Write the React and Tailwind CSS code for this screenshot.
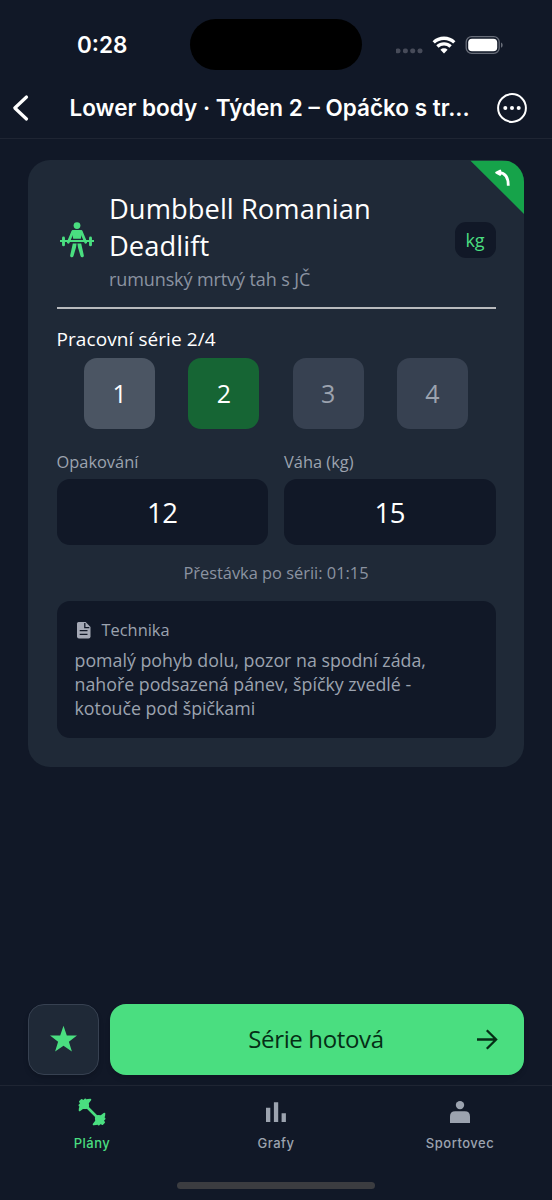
import React, { useState } from 'react';

const sets = [1, 2, 3, 4];

const tabs = [
  { id: 'plans', label: 'Plány', icon: DumbbellIcon },
  { id: 'charts', label: 'Grafy', icon: ChartIcon },
  { id: 'athlete', label: 'Sportovec', icon: PersonIcon },
];

function StatusBar() {
  return (
    <div className="flex h-[77px] items-start">
      <div className="w-[190px] pl-[77px] pt-[30px] text-[22.5px] leading-[30px] font-semibold">0:28</div>
      <div className="mt-[19px] h-[51px] w-[172px] rounded-full bg-black" />
      <div className="flex items-start pt-[36px] pl-[34px]">
        <svg className="h-[18px] w-[108px]" viewBox="0 0 108 18" fill="none">
          <g fill="#474b59">
            <rect x="-0.4" y="12.5" width="4.8" height="4.8" rx="1.8" />
            <rect x="7" y="12.5" width="4.8" height="4.8" rx="1.8" />
            <rect x="14.3" y="12.5" width="4.8" height="4.8" rx="1.8" />
            <rect x="21.6" y="12.5" width="4.8" height="4.8" rx="1.8" />
          </g>
          <g stroke="#fff" strokeWidth="3.3">
            <path d="M37.7 6.400A14.8 14.8 0 0 1 58.3 6.400" />
            <path d="M41.4 10.500A9.400 9.400 0 0 1 54.6 10.500" />
          </g>
          <path d="M44.4 13.700a5.200 5.200 0 0 1 7.200 0L48 17.400z" fill="#fff" />
          <rect x="70.2" y="0.700" width="33" height="16.600" rx="5.400" stroke="#686d79" strokeWidth="1.3" />
          <rect x="72.2" y="2.700" width="29" height="12.600" rx="3.800" fill="#fff" />
          <path d="M105 6.500c2.200.8 2.200 4.400 0 5.200z" fill="#686d79" />
        </svg>
      </div>
    </div>
  );
}

function Header() {
  return (
    <header className="flex h-[62px] items-center border-b border-[#1f2533] pl-[12px]">
      <button className="w-[57.500px]" aria-label="Zpět">
        <svg className="h-[28px] w-[18px]" viewBox="0 0 18 28" fill="none" stroke="#fff" strokeWidth="3.200" strokeLinecap="round" strokeLinejoin="round">
          <path d="M14.5 3L2.8 14l11.7 11" />
        </svg>
      </button>
      <h1 className="w-[427.500px] text-[22.5px] leading-[30px] font-semibold whitespace-nowrap">
        Lower body · Týden 2 – Opáčko s tr...
      </h1>
      <button aria-label="Více">
        <svg className="h-[30px] w-[30px]" viewBox="0 0 30 30" fill="#fff">
          <circle cx="15" cy="15" r="13.9" fill="none" stroke="#fff" strokeWidth="2" />
          <circle cx="8.3" cy="15" r="2" />
          <circle cx="15" cy="15" r="2" />
          <circle cx="21.7" cy="15" r="2" />
        </svg>
      </button>
    </header>
  );
}

function LifterIcon() {
  return (
    <svg className="h-[36px] w-[34px]" viewBox="0 0 34 36" fill="#4ade80">
      <circle cx="17" cy="3.6" r="3.400" />
      <path d="M13.5 8h7l1.700 1.500-1.400 7.300h-7.600l-1.400-7.300z" />
      <path d="M12.9 9.400L8.300 20.200M21.100 9.400l4.600 10.800" stroke="#4ade80" strokeWidth="2.800" strokeLinecap="round" />
      <path d="M0 19h34" stroke="#4ade80" strokeWidth="1.800" />
      <path d="M3.5 15.900v7M30.5 15.900v7" stroke="#4ade80" strokeWidth="2.900" strokeLinecap="round" />
      <path d="M12.800 21.500h3.800l-.6 3.900-2.500 8.600q-.5 1.500-2.100 1.200-1.500-.4-1.200-1.900zM17.400 21.500h3.800l2.600 11.800q.3 1.500-1.200 1.900-1.600.3-2.100-1.200l-2.500-8.600z" />
    </svg>
  );
}

function DumbbellIcon() {
  return (
    <svg
      className="h-[28px] w-[28px]"
      viewBox="0 0 28 28"
      stroke="currentColor"
      fill="currentColor"
      strokeWidth="2"
      strokeLinejoin="round"
    >
      <path d="M7 7l14 14" strokeWidth="2.600" />
      <path d="M12.300 1.700L9.800 5l.3 3.100-2 2-3.100-.3-3.300 2.500L1.900 10l.9-1.200L1.500 7.300l1.800-1.800L2 3.700 3.700 2l1.800 1.300 1.800-1.800 1.500 1.300 1.200-.9z" />
      <path
        transform="rotate(180 14 14)"
        d="M12.300 1.700L9.800 5l.3 3.100-2 2-3.100-.3-3.300 2.500L1.900 10l.9-1.200L1.500 7.300l1.800-1.800L2 3.700 3.700 2l1.800 1.300 1.800-1.800 1.500 1.300 1.200-.9z"
      />
    </svg>
  );
}

function ChartIcon() {
  return (
    <svg className="h-[28px] w-[28px]" viewBox="0 0 28 28" fill="currentColor">
      <path d="M4 9.800h4.300V24H4zM11.900 4.200h4.300V24h-4.300zM19.600 15.200h4.300V24h-4.300z" />
    </svg>
  );
}

function PersonIcon() {
  return (
    <svg className="h-[28px] w-[28px]" viewBox="0 0 28 28" fill="currentColor">
      <circle cx="14" cy="7.100" r="4.200" />
      <path d="M4 25V18.500q0-5.200 5.200-5.200h9.600q5.200 0 5.200 5.200V25z" />
    </svg>
  );
}

function SetButton({ number, current, onSelect }) {
  const state =
    number === current
      ? 'bg-[#166534] text-white'
      : number < current
        ? 'bg-[#4b5563] text-white'
        : 'bg-[#374151] text-[#9ca3af]';

  return (
    <button
      onClick={() => onSelect(number)}
      className={`h-[71px] w-[71px] rounded-[13px] pb-[2px] text-[25px] leading-[34px] ${state}`}
    >
      {number}
    </button>
  );
}

function NumberField({ label, value }) {
  return (
    <label className="flex-1">
      <span className="block text-[16.400px] leading-[22px] text-[#9ca3af]">{label}</span>
      <input
        defaultValue={value}
        className="mt-[6px] block h-[66px] w-full rounded-[13px] bg-[#111827] text-center text-[27.500px] tracking-[-0.500px] text-white"
      />
    </label>
  );
}

function ExerciseCard() {
  const [current, setCurrent] = useState(2);

  return (
    <section className="relative mx-[28px] mt-[21px] h-[607px] overflow-hidden rounded-[22px] bg-[#1f2937] px-[28.500px] pt-[30px] font-['Open_Sans',sans-serif]">
      <svg className="absolute top-0 right-0 h-[54px] w-[54px]" viewBox="0 0 54 54">
        <path d="M0.500 0.800H54V54z" fill="#16a34a" />
        <path d="M29 12.700c5.700.2 9.300 4.300 9.300 13" stroke="#fff" strokeWidth="2.800" fill="none" />
        <path d="M26.200 12.600l4-2v4.200z" fill="#fff" stroke="#fff" strokeWidth="2" strokeLinejoin="round" />
      </svg>

      <div className="flex h-[119px] items-start border-b-2 border-[#b8babd]">
        <div className="mt-[32px] ml-[3px] w-[49.500px]">
          <LifterIcon />
        </div>
        <div className="flex-1">
          <h2 className="text-[27.300px] leading-[37px] tracking-[0.060px]">
            Dumbbell Romanian
            <br />
            Deadlift
          </h2>
          <p className="mt-[3px] text-[18px] leading-[25px] tracking-[-0.100px] text-[#8b93a1]">rumunský mrtvý tah s JČ</p>
        </div>
        <span className="mt-[32px] h-[36px] w-[41px] rounded-[11px] bg-[#111827] text-center text-[18px] leading-[37px] text-[#4ade80]">
          kg
        </span>
      </div>

      <h3 className="mt-[17px] text-[19px] leading-[26px] tracking-[0.080px]">Pracovní série 2/4</h3>
      <div className="mt-[6px] flex justify-center gap-[33.200px]">
        {sets.map(n => (
          <SetButton key={n} number={n} current={current} onSelect={setCurrent} />
        ))}
      </div>

      <div className="mt-[22px] flex gap-[16px]">
        <NumberField label="Opakování" value="12" />
        <NumberField label="Váha (kg)" value="15" />
      </div>

      <p className="mt-[16px] text-center text-[16.400px] leading-[24px] text-[#8b93a1]">Přestávka po sérii: 01:15</p>

      <div className="mt-[16px] h-[137px] rounded-[13px] bg-[#111827] px-[18px] pt-[18px] text-[#9ca3af]">
        <div className="flex h-[22px] items-center">
          <svg className="ml-[1.500px] mr-[10.500px] h-[18px] w-[15px]" viewBox="0 0 15 18">
            <path d="M2.500 1h7.100L14.500 6v9.500q0 2-2 2H3Q1 17.500 1 15.500V2.500Q1 1 2.500 1z" fill="#a5a9b6" />
            <path d="M8.800 2v4.700h4.500M3.700 9.700h7.800M3.700 13.300h7.800" stroke="#111827" strokeWidth="1.300" fill="none" />
          </svg>
          <span className="text-[16.400px] leading-[22px]">Technika</span>
        </div>
        <p className="mt-[7px] text-[17.800px] leading-[24px] whitespace-nowrap">
          pomalý pohyb dolu, pozor na spodní záda,
          <br />
          nahoře podsazená pánev, špíčky zvedlé -
          <br />
          kotouče pod špičkami
        </p>
      </div>
    </section>
  );
}

export default function App() {
  const [activeTab, setActiveTab] = useState('plans');

  return (
    <div className="flex h-[1200px] w-[552px] flex-col overflow-hidden bg-[#111827] font-['Inter',sans-serif] text-white">
      <StatusBar />
      <Header />
      <main className="flex-1">
        <ExerciseCard />
      </main>

      <div className="flex h-[81px] gap-[11px] px-[28px] font-['Open_Sans',sans-serif]">
        <button className="flex h-[71px] w-[71px] items-center justify-center rounded-[16px] border-[1.500px] border-[#374151] bg-[#1f2937] pb-[2px] shadow-md" aria-label="Oblíbené">
          <svg className="h-[28px] w-[28px]" viewBox="0 0 28 28" fill="#4ade80">
            <path d="M13.500 0.800l3.300 9.600 10.200.2-8.100 6.200 3 9.700-8.400-5.800-8.400 5.800 3-9.700L0 10.600l10.200-.2z" />
          </svg>
        </button>
        <button className="flex h-[71px] flex-1 items-center rounded-[16px] bg-[#4ade80] pr-[25px] pl-[47px] text-[24px] tracking-[-0.350px] text-[#052e16] shadow-md">
          <span className="flex-1 pb-px text-center">Série hotová</span>
          <svg className="h-[24px] w-[24px]" viewBox="0 0 24 24" fill="none" stroke="currentColor" strokeWidth="2.300">
            <path d="M2 11.500h18.500M11.800 2.200l9.300 9.300-9.300 9.300" />
          </svg>
        </button>
      </div>

      <nav className="flex h-[115px] flex-col items-center border-t border-[#1f2533]">
        <div className="flex h-[96px] w-full pt-[12px]">
          {tabs.map(({ id, label, icon: Icon }) => (
            <button
              key={id}
              onClick={() => setActiveTab(id)}
              className={`flex flex-1 flex-col items-center self-start text-[13px] font-medium tracking-[0.500px] ${
                activeTab === id ? 'text-[#4ade80]' : 'text-[#9ca3af]'
              }`}
            >
              <Icon />
              <span className="mt-[7px] leading-[20px]">{label}</span>
            </button>
          ))}
        </div>
        <div className="h-[7px] w-[198px] rounded-full bg-[#3b3c40]" />
      </nav>
    </div>
  );
}
